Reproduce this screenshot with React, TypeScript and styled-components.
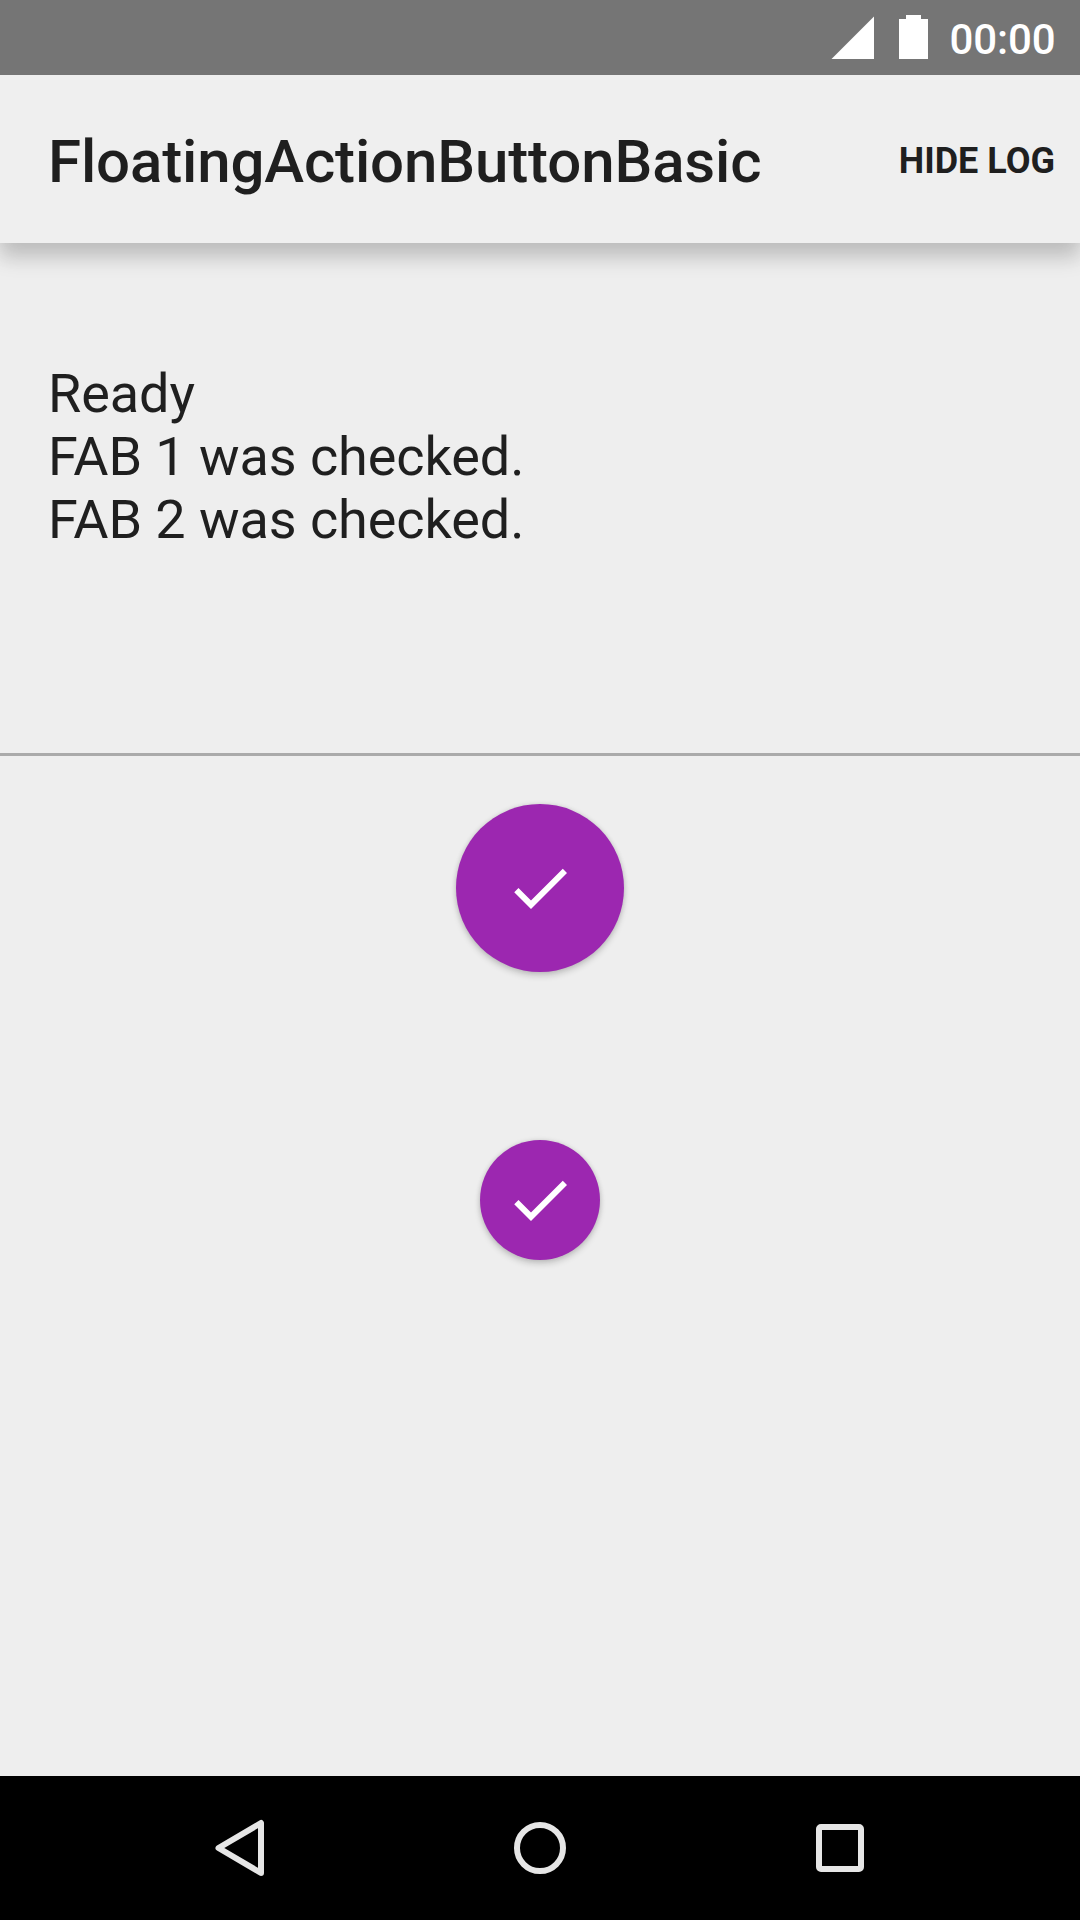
import React from "react";
import styled, { createGlobalStyle } from "styled-components";

const GlobalStyle = createGlobalStyle`
  body {
    margin: 0;
    background: #eeeeee;
    font-family: Roboto, "Noto Sans", sans-serif;
    color: #1f1f1f;
  }
`;

const Screen = styled.div`
  display: flex;
  flex-direction: column;
  width: 1080px;
  height: 1920px;
  overflow: hidden;
  background: #eeeeee;
`;

const StatusBar = styled.header`
  display: flex;
  justify-content: flex-end;
  flex: none;
  height: 75px;
  padding-right: 24.5px;
  box-sizing: border-box;
  background: #757575;
  z-index: 2;
`;

const StatusIcons = styled.svg`
  display: block;
  width: 118px;
  height: 75px;
`;

const Clock = styled.time`
  font-size: 42px;
  font-weight: 500;
  line-height: 49px;
  letter-spacing: -0.1px;
  padding-top: 15px;
  color: #ffffff;
`;

const Toolbar = styled.div`
  display: flex;
  align-items: center;
  justify-content: space-between;
  flex: none;
  height: 168px;
  padding: 0 25px 0 48px;
  box-sizing: border-box;
  background: #efefef;
  box-shadow: 0 17px 18px rgba(0, 0, 0, 0.13), 0 2px 24px rgba(0, 0, 0, 0.15);
  z-index: 1;
`;

const Title = styled.h1`
  margin: 0;
  padding-top: 6px;
  font-size: 60px;
  font-weight: 500;
  line-height: 70px;
  letter-spacing: -0.14px;
`;

const MenuButton = styled.button`
  border: 0;
  padding: 3px 0 0;
  background: none;
  color: inherit;
  font-family: inherit;
  font-size: 36px;
  font-weight: 700;
  line-height: 42px;
`;

const Log = styled.section`
  flex: none;
  height: 510px;
  padding: 119px 48px 0;
  box-sizing: border-box;
`;

const LogLine = styled.p`
  margin: 0;
  font-size: 54px;
  line-height: 63px;
  letter-spacing: -0.07px;
`;

const Divider = styled.hr`
  flex: none;
  width: 100%;
  height: 3px;
  margin: 0;
  border: 0;
  background: #aaaaaa;
`;

const Content = styled.main`
  display: flex;
  flex: 1;
  flex-direction: column;
  align-items: center;
  gap: 168px;
  padding-top: 48px;
`;

const Fab = styled.button<{ $size: number }>`
  display: flex;
  align-items: center;
  justify-content: center;
  flex: none;
  width: ${(p) => p.$size}px;
  height: ${(p) => p.$size}px;
  padding: 0;
  border: 0;
  border-radius: 50%;
  background: #9c27b0;
  box-shadow: 0 4px 6px rgba(0, 0, 0, 0.16), 0 0 5px rgba(0, 0, 0, 0.12);
`;

const FabIcon = styled.svg`
  width: 72px;
  height: 72px;
  fill: #ffffff;
`;

const NavBar = styled.nav`
  display: flex;
  align-items: center;
  justify-content: center;
  gap: 228px;
  flex: none;
  height: 144px;
  background: #000000;
`;

const NavIcon = styled.svg`
  width: 72px;
  height: 72px;
  fill: none;
  stroke: #e6e6e6;
  stroke-width: 6;
  stroke-linejoin: round;
`;

const CheckIcon = () => (
  <FabIcon viewBox="0 0 24 24">
    <path d="M9 16.17L4.83 12l-1.42 1.41L9 19 21 7l-1.41-1.41z" />
  </FabIcon>
);

const messages = ["Ready", "FAB 1 was checked.", "FAB 2 was checked."];

export default function App() {
  return (
    <>
      <GlobalStyle />
      <Screen>
        <StatusBar>
          <StatusIcons viewBox="0 0 118 75" fill="#ffffff">
            <path d="M0.5 59L43 16.5V59z" />
            <path d="M68 19h7v-4h15v4h7v40H68z" />
          </StatusIcons>
          <Clock>00:00</Clock>
        </StatusBar>
        <Toolbar>
          <Title>FloatingActionButtonBasic</Title>
          <MenuButton>HIDE LOG</MenuButton>
        </Toolbar>
        <Log>
          {messages.map((message) => (
            <LogLine key={message}>{message}</LogLine>
          ))}
        </Log>
        <Divider />
        <Content>
          <Fab $size={168} aria-label="FAB 1">
            <CheckIcon />
          </Fab>
          <Fab $size={120} aria-label="FAB 2">
            <CheckIcon />
          </Fab>
        </Content>
        <NavBar>
          <NavIcon viewBox="0 0 72 72">
            <path d="M14.5 36L57 11v50z" />
          </NavIcon>
          <NavIcon viewBox="0 0 72 72">
            <circle cx="36" cy="36" r="23" />
          </NavIcon>
          <NavIcon viewBox="0 0 72 72">
            <rect x="15" y="15" width="42" height="42" rx="2" />
          </NavIcon>
        </NavBar>
      </Screen>
    </>
  );
}
